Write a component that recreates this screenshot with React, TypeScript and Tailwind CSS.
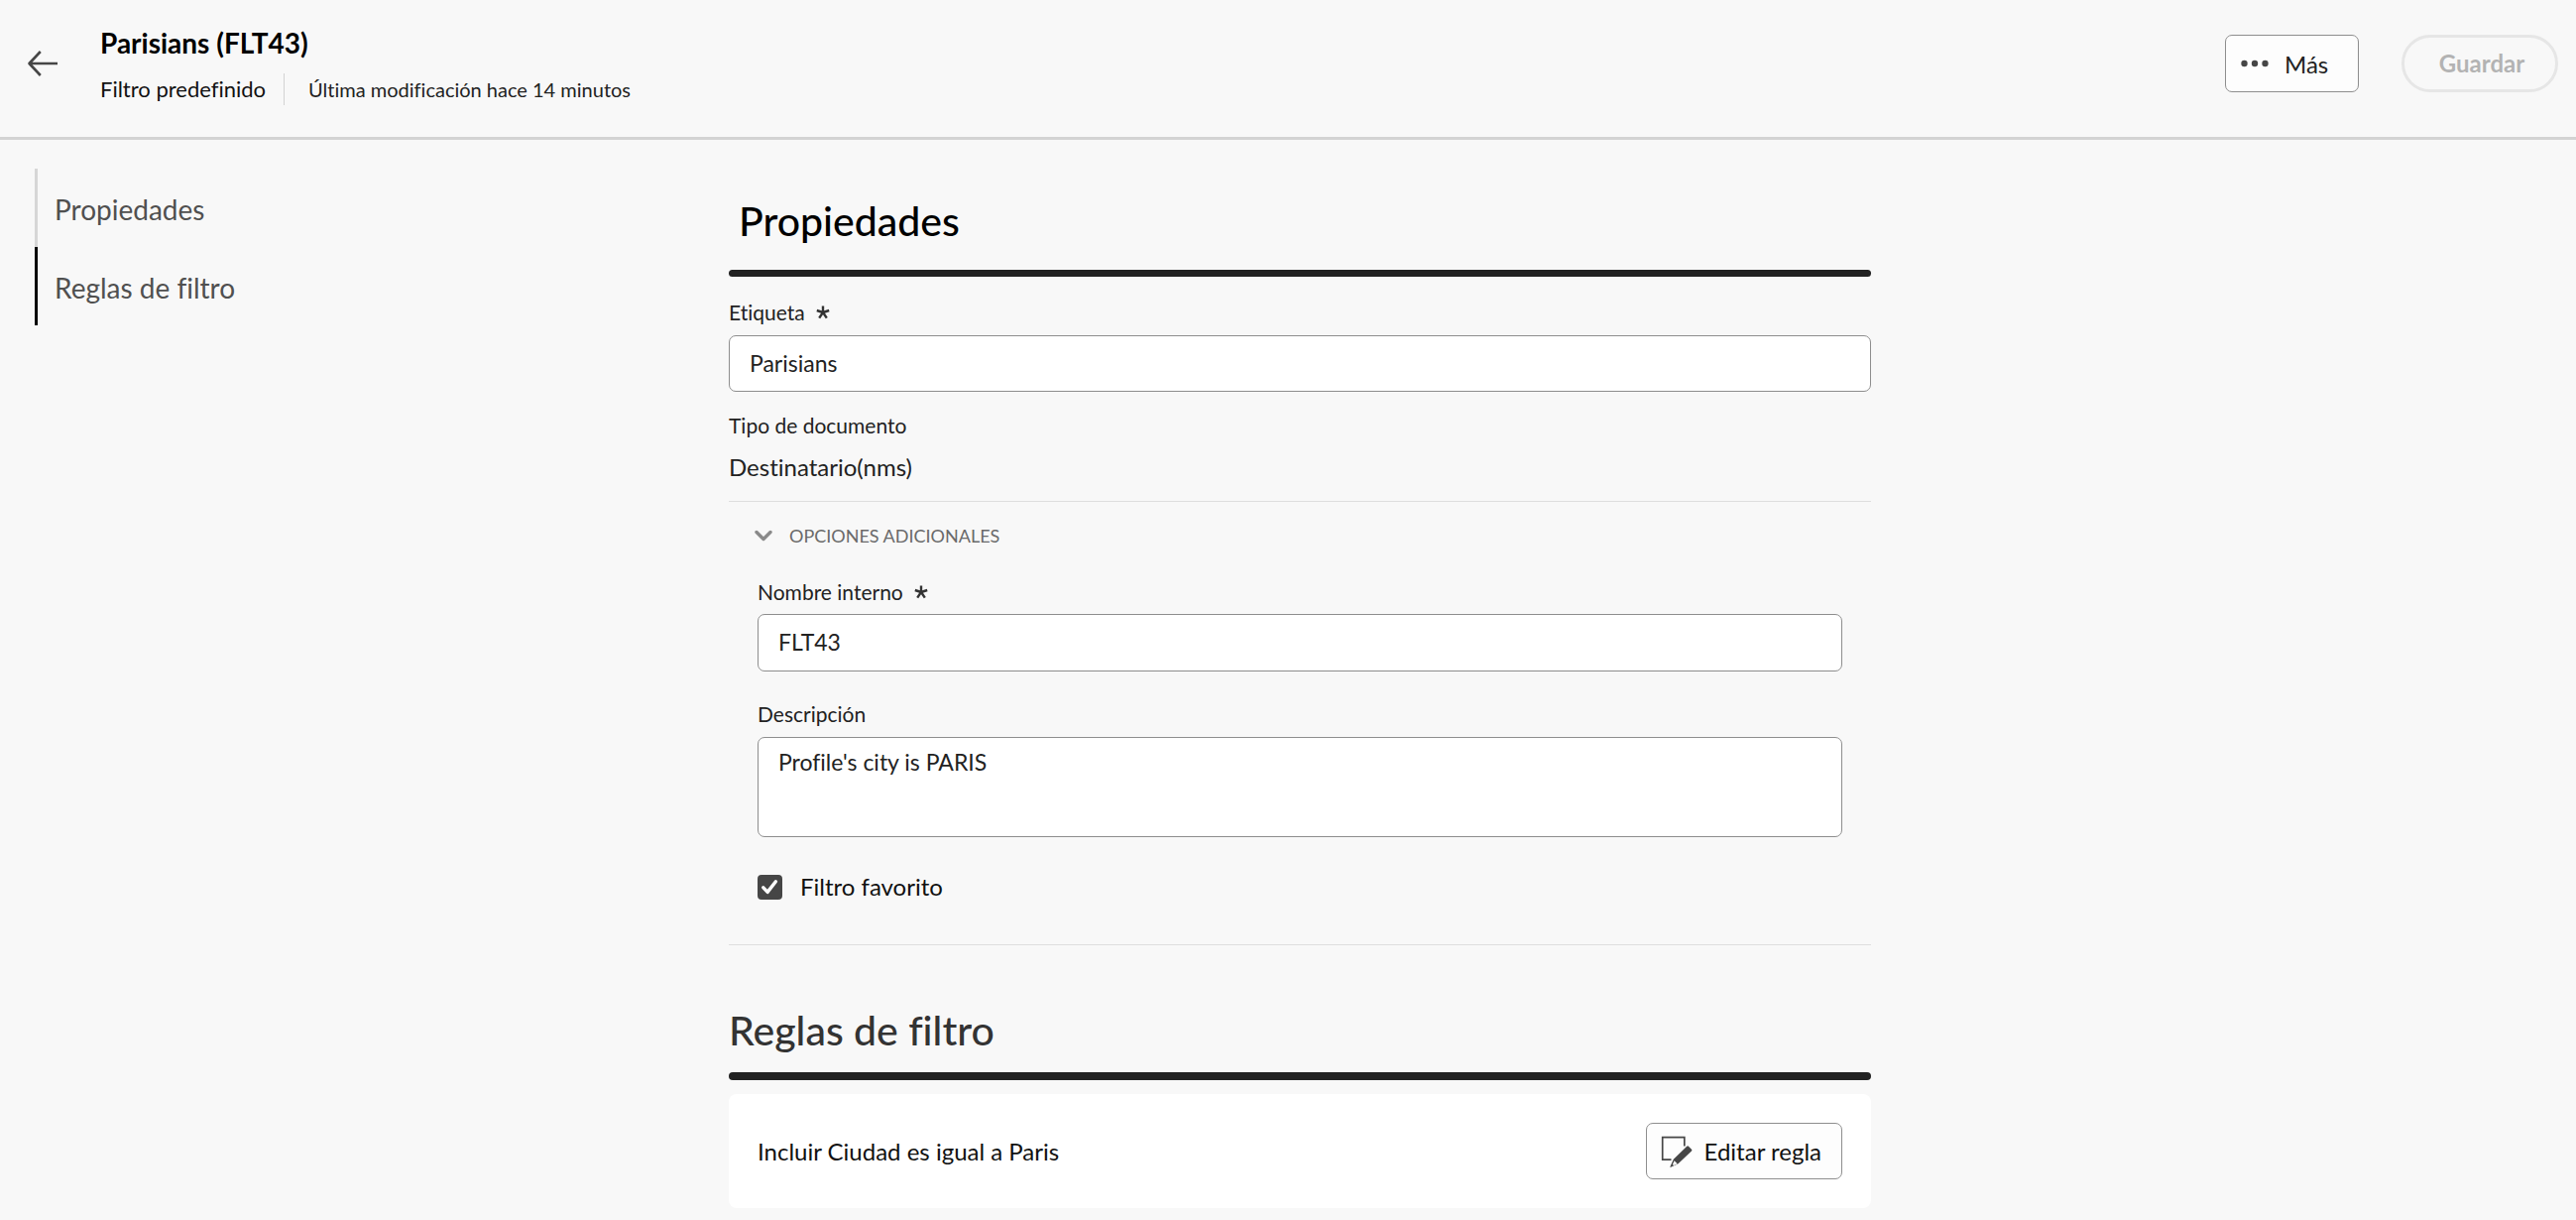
import React, { useState } from "react";

function Asterisk() {
  return (
    <svg className="size-4" viewBox="0 0 16 16" fill="none" stroke="#333" strokeWidth="2.4" aria-hidden="true">
      <path d="M8 8V1.5M8 8l6.2-2M8 8l3.8 5.6M8 8l-3.8 5.6M8 8L1.800 6" />
    </svg>
  );
}

function BackIcon() {
  return (
    <svg className="h-8 w-8" viewBox="0 0 32 32" fill="none" stroke="#464646" strokeWidth="2.6" aria-hidden="true">
      <path d="M2.500 16H31M13.800 4L2.500 16l11.300 12" strokeLinejoin="round" />
    </svg>
  );
}

function EditIcon() {
  return (
    <svg className="size-8" viewBox="0 0 32 32" aria-hidden="true">
      <path d="M10.500 24.200H1.700V1.700H23.800V10.500" fill="none" stroke="#464646" strokeWidth="1.700" />
      <path d="M26.200 10.800q.9-.9 1.800 0l3 3q.9.900 0 1.800L17.500 28.300 10 31.800q-.8.200-.6-.6L12.800 23.800z" fill="#464646" />
      <path d="M13.600 25.300l3 3-3.600 1.700-1.100-1.100z" fill="#fdfdfd" />
    </svg>
  );
}

function SectionTitle({ className, children }: { className: string; children: React.ReactNode }) {
  return <h2 className={`text-[41px] leading-12 font-medium ${className}`}>{children}</h2>;
}

const label = "flex items-center gap-2.5 text-[21px] leading-6 text-[#222]";
const field = "block w-full rounded-[7px] border border-[#8e8e8e] bg-white px-5 text-[23px] text-[#222] outline-none";

export default function App() {
  const [open, setOpen] = useState(true);
  const [favorite, setFavorite] = useState(true);

  return (
    <div className="min-h-screen bg-[#f8f8f8] font-['Lato',sans-serif] text-[#222] [font-variant-ligatures:none]">
      <header className="flex h-[141px] items-start justify-between border-b-[3px] border-[#d3d3d3] pr-[18px] pl-[27px]">
        <div className="flex items-start">
          <button type="button" aria-label="Atrás" className="mt-12 mr-[42px]">
            <BackIcon />
          </button>
          <div className="pt-[27px]">
            <h1 className="text-[28px] leading-8 font-bold text-black">Parisians (FLT43)</h1>
            <div className="mt-[15px] flex items-center leading-8">
              <span className="border-r border-[#d3d3d3] pr-[18px] text-[22px] text-[#111]">Filtro predefinido</span>
              <span className="pl-6 text-[20px] text-[#222]">Última modificación hace 14 minutos</span>
            </div>
          </div>
        </div>
        <div className="flex gap-[43px] pt-[35px]">
          <button type="button" className="flex h-[58px] w-[135px] items-center gap-4 rounded-[7px] border border-[#8e8e8e] bg-[#fdfdfd] pl-[15px] text-[24px]">
            <svg className="h-2 w-7" viewBox="0 0 28 8" fill="#464646" aria-hidden="true">
              <circle cx="3.500" cy="4" r="3.200" />
              <circle cx="14" cy="4" r="3.200" />
              <circle cx="24.500" cy="4" r="3.200" />
            </svg>
            <span className="pt-0.5">Más</span>
          </button>
          <button type="button" disabled className="h-[58px] w-[158px] rounded-full border-[3px] border-[#e6e6e6] pl-1 text-[24px] font-bold text-[#b3b3b3]">
            Guardar
          </button>
        </div>
      </header>

      <div className="grid grid-cols-[minmax(0,1fr)_minmax(0,1152px)_minmax(0,1fr)] pl-6">
        <nav className="flex flex-col pt-[29px] pl-[11px] text-[28px] text-[#505050]">
          <a href="#propiedades" className="flex h-[79px] items-center border-l-[3px] border-[#d6d6d6] pt-0.5 pl-[17px]">
            Propiedades
          </a>
          <a href="#reglas" className="flex h-[79px] items-center border-l-[3px] border-black pt-0.5 pl-[17px]">
            Reglas de filtro
          </a>
        </nav>

        <main>
          <section id="propiedades">
            <SectionTitle className="pt-[58px] pb-[25px] pl-2.5 text-black">Propiedades</SectionTitle>
            <div className="h-[7px] rounded-full bg-[#222]" />
            <label htmlFor="etiqueta" className={`${label} mt-6`}>
              Etiqueta <Asterisk />
            </label>
            <input id="etiqueta" defaultValue="Parisians" className={`${field} mt-[11px] h-[57px] pb-0.5`} />
            <p className="mt-[22px] text-[21px] leading-6">Tipo de documento</p>
            <p className="mt-3.5 text-[24px] leading-8">Destinatario(nms)</p>
          </section>

          <section className="mt-[18px] border-y border-[#dedede] px-[29px] pt-[22px] pb-[42px]">
            <button type="button" aria-expanded={open} onClick={() => setOpen(!open)} className="flex items-center gap-4 text-[18px] leading-6 text-[#6a6a6a]">
              <svg className="-ml-1 h-5 w-5" viewBox="0 0 20 20" fill="none" stroke="#8a8a8a" strokeWidth="3.400" strokeLinecap="round" strokeLinejoin="round" aria-hidden="true">
                <path d="M3 6.500l7 7 7-7" />
              </svg>
              OPCIONES ADICIONALES
            </button>
            {open && (
              <div>
                <label htmlFor="nombre" className={`${label} mt-[33px]`}>
                  Nombre interno <Asterisk />
                </label>
                <input id="nombre" defaultValue="FLT43" className={`${field} mt-2.5 h-[58px] pb-0.5`} />
                <label htmlFor="descripcion" className={`${label} mt-[31px]`}>
                  Descripción
                </label>
                <textarea id="descripcion" defaultValue="Profile's city is PARIS" className={`${field} mt-[11px] h-[101px] resize-none pt-2 leading-8`} />
                <label className="mt-[34px] flex items-center gap-[18px] text-[24px] leading-8 text-[#111]">
                  <span className="grid size-[25px]">
                    <input
                      type="checkbox"
                      checked={favorite}
                      onChange={(e) => setFavorite(e.target.checked)}
                      className="col-start-1 row-start-1 size-[25px] appearance-none rounded-[4px] border-2 border-[#464646] checked:bg-[#464646]"
                    />
                    {favorite && (
                      <svg className="pointer-events-none col-start-1 row-start-1 size-[25px]" viewBox="0 0 25 25" fill="none" stroke="#fff" strokeWidth="3.400" strokeLinecap="round" strokeLinejoin="round" aria-hidden="true">
                        <path d="M5.800 12.800l4.300 4.600L18.400 6.800" />
                      </svg>
                    )}
                  </span>
                  Filtro favorito
                </label>
              </div>
            )}
          </section>

          <section id="reglas">
            <SectionTitle className="pt-[62px] pb-[18px] text-[#333]">Reglas de filtro</SectionTitle>
            <div className="h-2 rounded-full bg-[#222]" />
            <div className="mt-3.5 flex h-[115px] items-center justify-between rounded-lg bg-white px-[29px] text-[24px] text-[#111]">
              <p>Incluir Ciudad es igual a Paris</p>
              <button type="button" className="flex h-[57px] items-center gap-3 rounded-[7px] border border-[#8e8e8e] bg-[#fdfdfd] pr-5 pl-3.5">
                <EditIcon />
                Editar regla
              </button>
            </div>
          </section>
        </main>
      </div>
    </div>
  );
}
